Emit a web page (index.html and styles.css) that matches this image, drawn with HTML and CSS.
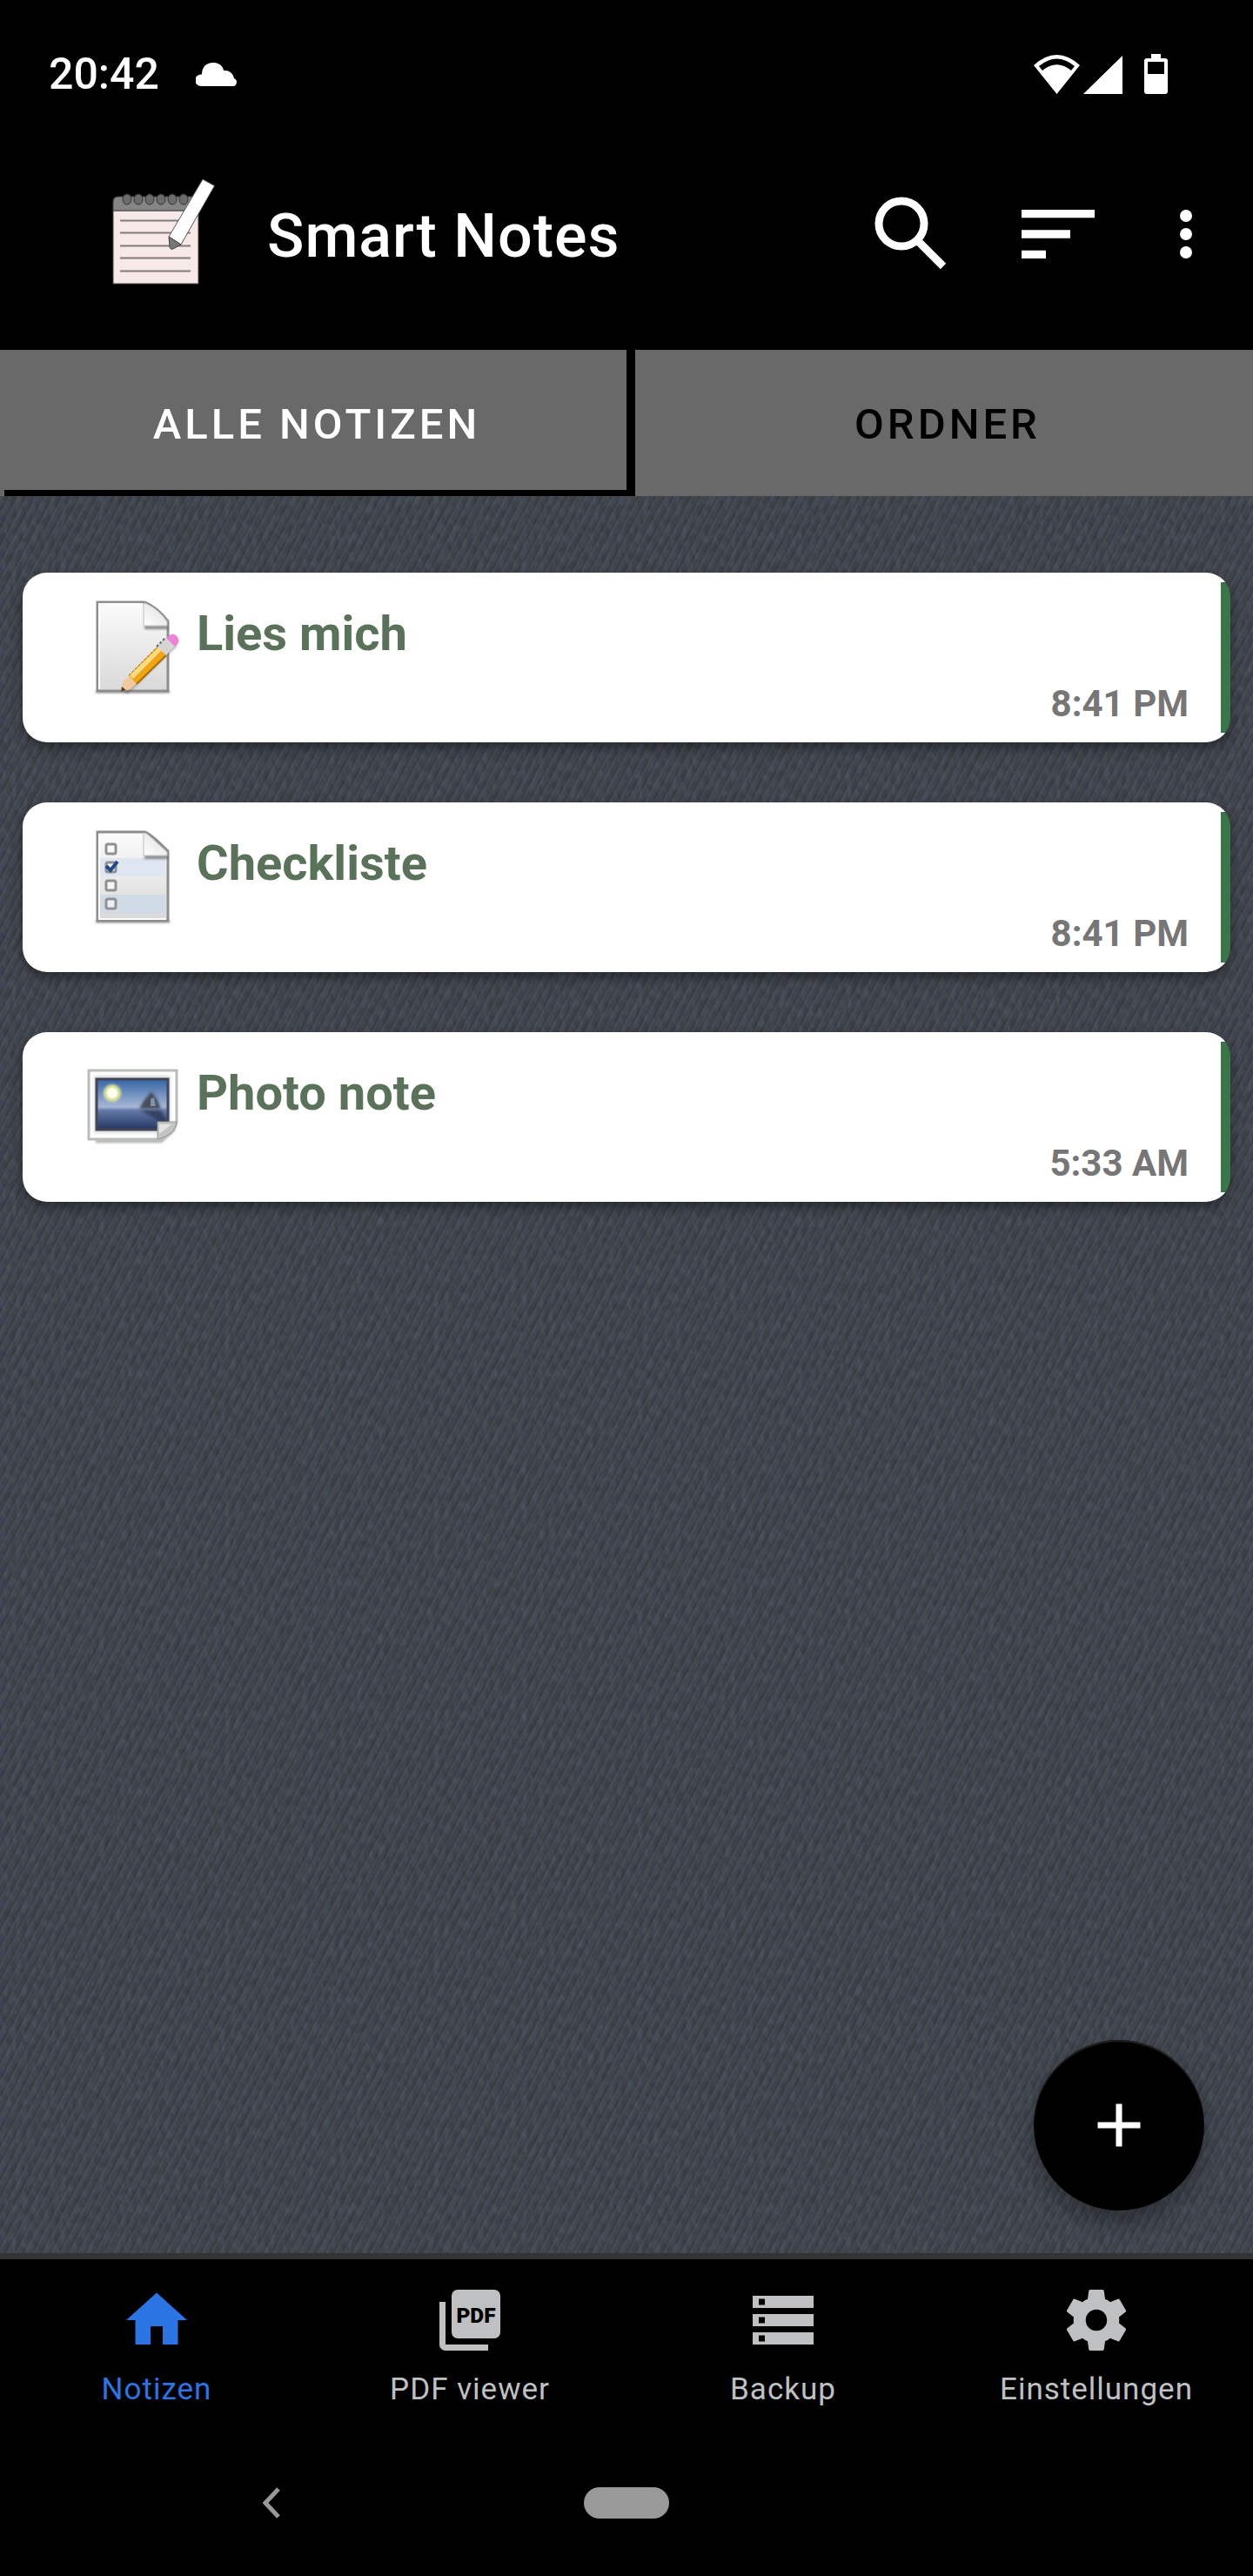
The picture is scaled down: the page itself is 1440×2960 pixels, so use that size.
FILE: index.html
```html
<!DOCTYPE html>
<html lang="de">
<head>
<meta charset="utf-8">
<meta name="viewport" content="width=device-width, initial-scale=1">
<title>Smart Notes</title>
<link rel="stylesheet" href="styles.css">
</head>
<body>
<header class="top">
  <div class="status">
    <span class="clock">20:42</span>
    <svg class="cloud" width="49" height="27" viewBox="0 0 49 27" aria-hidden="true"><path fill="#fff" d="M6 27a6.500 6.500 0 0 1 0-13.500h1C7 5 12 0 20 0c7 0 11 4 12 9 6-.5 11 3 12 9a4.700 4.700 0 0 1-1 9z"/></svg>
    <div class="signals">
      <svg width="53" height="45" viewBox="0 0 53 45" aria-hidden="true"><path fill="#fff" fill-rule="evenodd" d="M26.500 45 0 12Q26.500-12 53 12zM6 13l4 5Q26.500 4.500 43 18l4-5Q26.500-4 6 13z"/></svg>
      <svg width="45" height="45" viewBox="0 0 45 45" aria-hidden="true"><path fill="#fff" d="M0 45 45 1v44z"/></svg>
      <svg class="battery" width="27" height="46" viewBox="0 0 27 46" aria-hidden="true"><path fill="#fff" fill-rule="evenodd" d="M8 5V0h11v5h5a3 3 0 0 1 3 3v35a3 3 0 0 1-3 3H3a3 3 0 0 1-3-3V8a3 3 0 0 1 3-3zM4 9v14h19V9z"/></svg>
    </div>
  </div>
  <div class="toolbar">
    <svg width="118" height="128" viewBox="0 0 118 128" aria-hidden="true">
      <path d="M1 37h98v84H1z" fill="#f7e9e8" stroke="#4b4444"/>
      <path d="M1 37V27q0-6 6-6h86q6 0 6 6v10z" fill="#858585" stroke="#444"/>
      <g fill="#6b6b6b" stroke="#333"><ellipse cx="17" cy="24" rx="5" ry="6"/><ellipse cx="30" cy="24" rx="5" ry="6"/><ellipse cx="43" cy="24" rx="5" ry="6"/><ellipse cx="56" cy="24" rx="5" ry="6"/><ellipse cx="69" cy="24" rx="5" ry="6"/><ellipse cx="82" cy="24" rx="5" ry="6"/></g>
      <path d="M9 48.500h81M9 62.500h81M9 77.500h81M9 91.500h81M9 106.500h81" stroke="#827b7a" stroke-width="2"/>
      <path d="M104 1l13.500 7.500L79 76l-14-9z" fill="#fff" stroke="#555"/>
      <path d="M65 67l14 9-9 5q-4 1-4-3z" fill="#777" stroke="#444"/>
    </svg>
    <h1 class="title">Smart Notes</h1>
    <div class="actions">
      <button type="button" aria-label="Suchen"><svg width="112" height="112" viewBox="0 0 112 112"><circle cx="37" cy="44" r="26" fill="none" stroke="#fff" stroke-width="9"/><path d="M56 64l29 29" stroke="#fff" stroke-width="9"/></svg></button>
      <button type="button" aria-label="Sortieren"><svg width="112" height="112" viewBox="0 0 24 24"><path fill="#fff" d="M3 18h6v-2H3zM3 6v2h18V6zm0 7h12v-2H3z"/></svg></button>
      <button type="button" aria-label="Mehr"><svg width="84" height="84" viewBox="0 0 24 24"><g fill="#fff"><circle cx="12" cy="6" r="2"/><circle cx="12" cy="12" r="2"/><circle cx="12" cy="18" r="2"/></g></svg></button>
    </div>
  </div>
  <div class="tabs" role="tablist">
    <button type="button" class="tab active" role="tab" aria-selected="true">ALLE NOTIZEN</button>
    <button type="button" class="tab" role="tab" aria-selected="false">ORDNER</button>
  </div>
</header>

<main class="content">
  <ul class="notes">
    <li class="card">
      <svg class="note-icon" width="112" height="112" viewBox="0 0 112 112" aria-hidden="true">
        <defs>
          <linearGradient id="paper" x1="0" y1="0" x2="0" y2="1"><stop offset="0" stop-color="#fcfcfc"/><stop offset="1" stop-color="#d9d9d9"/></linearGradient>
          <linearGradient id="fold" x1="0" y1="1" x2="1" y2="0"><stop offset="0" stop-color="#fff"/><stop offset="1" stop-color="#ddd"/></linearGradient>
          <linearGradient id="sky" x1="0" y1="0" x2="0" y2="1"><stop offset="0" stop-color="#3465a4"/><stop offset=".55" stop-color="#a6b6d6"/><stop offset=".62" stop-color="#6379a8"/><stop offset="1" stop-color="#22365f"/></linearGradient>
          <filter id="soft" filterUnits="userSpaceOnUse" x="0" y="0" width="112" height="112"><feGaussianBlur stdDeviation="1.500"/></filter>
        </defs>
        <path d="M14 109h85" stroke="#999" stroke-width="3" filter="url(#soft)"/>
        <path d="M16 6h54q15 6 27 22v80H16z" fill="url(#paper)" stroke="#8d8d8d" stroke-width="3"/>
        <path d="M18 106V8h50" fill="none" stroke="#fff" stroke-width="2"/>
        <path d="M70 35h27" stroke="#666" stroke-width="3" filter="url(#soft)"/>
        <path d="M69 7q2 0 4 1 13 6 23 20v5H69z" fill="url(#fold)" stroke="#bbb"/>
        <path d="M48 110 106 54" stroke="#555" stroke-width="5" opacity=".5" filter="url(#soft)"/>
        <path d="M43 109l2-11 8-8 9 8-8 8z" fill="#f3c9a0"/><path d="M43 109l1-6 5 4z" fill="#53402f"/>
        <path d="M52 90 85 57l10 10-34 33z" fill="#f0a512"/><path d="M53 90 86 58l4 3-33 33z" fill="#ffdb85"/><path d="M52 90 85 57" stroke="#9c6a17" stroke-dasharray="3 2"/><path d="M61 100 95 67" stroke="#a86b0b" stroke-width="2"/>
        <path d="M85 57l10-10 10 9-10 11z" fill="#d5d5d5"/><path d="M84 57l10-10" stroke="#666" stroke-width="2" stroke-dasharray="3 2"/>
        <path d="M95 47q8-8 13-1 4 6-3 11z" fill="#ee82d8"/>
      </svg>
      <div class="note-body"><h2 class="note-title">Lies mich</h2><time class="note-time">8:41 PM</time></div>
    </li>
    <li class="card">
      <svg class="note-icon" width="112" height="112" viewBox="0 0 112 112" aria-hidden="true">
        <path d="M14 109h85" stroke="#999" stroke-width="3" filter="url(#soft)"/>
        <path d="M16 6h54q5 0 27 22v80H16z" fill="url(#paper)" stroke="#8d8d8d" stroke-width="3"/>
        <path d="M19 36h75v21H19z" fill="#dde6f1"/><path d="M19 78h75v21H19z" fill="#d1dbe6"/>
        <path d="M18 8v98h77" fill="none" stroke="#fff" stroke-width="2"/>
        <path d="M70 35h27" stroke="#666" stroke-width="3" filter="url(#soft)"/>
        <path d="M69 7q3 0 5 2l22 20v4H69z" fill="url(#fold)" stroke="#bbb"/>
        <g fill="#fff" fill-opacity=".6" stroke="#8f9194" stroke-width="3"><rect x="26" y="20" width="11" height="11" rx="2"/><rect x="26" y="41" width="11" height="11" rx="2"/><rect x="26" y="62" width="11" height="11" rx="2"/><rect x="26" y="83" width="11" height="11" rx="2"/></g>
        <path d="M26 45l5 5 8-10" fill="none" stroke="#204a87" stroke-width="4"/>
      </svg>
      <div class="note-body"><h2 class="note-title">Checkliste</h2><time class="note-time">8:41 PM</time></div>
    </li>
    <li class="card">
      <svg class="note-icon" width="112" height="112" viewBox="0 0 112 112" aria-hidden="true">
        <path d="M14 97h75l15-14" fill="none" stroke="#aaa" stroke-width="4" filter="url(#soft)"/>
        <path d="M6 16h101v60q-3 14-20 19H6z" fill="#fff" stroke="#b9bdb7" stroke-width="3"/>
        <path d="M12 22h88v66H12z" fill="#ddd" filter="url(#soft)"/>
        <path d="M15 26h82v58H15z" fill="url(#sky)" stroke="#424656" stroke-width="3"/>
        <circle cx="33" cy="42" r="10" fill="#dfe89a" filter="url(#soft)"/><circle cx="33" cy="42" r="6" fill="#fffff0"/>
        <path d="M64 60l5-9 9-11 7 10 4 10z" fill="#46505f" filter="url(#soft)"/><path d="M77 57v-8l4-2 2 10z" fill="#8391a8"/>
        <path d="M65 62h24l6 11v6L80 70z" fill="#26334f" opacity=".7" filter="url(#soft)"/>
        <path d="M85 95V75h22q-1 15-22 20z" fill="#c3c5c3" stroke="#979b97"/><path d="M87 89V78h14z" fill="#e4e4e4"/>
      </svg>
      <div class="note-body"><h2 class="note-title">Photo note</h2><time class="note-time">5:33 AM</time></div>
    </li>
  </ul>
  <button type="button" class="fab" aria-label="Neue Notiz"><svg width="84" height="84" viewBox="0 0 24 24"><path fill="#fff" d="M19 13h-6v6h-2v-6H5v-2h6V5h2v6h6z"/></svg></button>
</main>

<footer class="bottom">
  <nav class="nav">
    <a href="#notizen" class="nav-item current"><svg width="84" height="84" viewBox="0 0 24 24" aria-hidden="true"><path fill="currentColor" d="M10 20v-6h4v6h5v-8h3L12 3 2 12h3v8z"/></svg>Notizen</a>
    <a href="#pdf" class="nav-item"><svg width="84" height="84" viewBox="0 0 24 24" aria-hidden="true"><path fill="currentColor" d="M20 2H8a2 2 0 0 0-2 2v12a2 2 0 0 0 2 2h12a2 2 0 0 0 2-2V4a2 2 0 0 0-2-2zM4 6H2v14a2 2 0 0 0 2 2h14v-2H4z"/><text class="pdf-mark" x="14" y="12.800">PDF</text></svg>PDF viewer</a>
    <a href="#backup" class="nav-item"><svg width="84" height="84" viewBox="0 0 24 24" aria-hidden="true"><path fill="currentColor" fill-rule="evenodd" d="M2 20h20v-4H2zm2-3h2v2H4zM2 4v4h20V4zm4 3H4V5h2zm-4 7h20v-4H2zm2-3h2v2H4z"/></svg>Backup</a>
    <a href="#einstellungen" class="nav-item"><svg width="84" height="84" viewBox="0 0 24 24" aria-hidden="true"><path fill="currentColor" d="M12 15.500A3.500 3.500 0 0 1 8.500 12 3.500 3.500 0 0 1 12 8.500a3.500 3.500 0 0 1 3.500 3.500 3.500 3.500 0 0 1-3.500 3.500m7.430-2.530c.04-.32.07-.64.07-.97s-.03-.66-.07-1l2.110-1.630c.19-.15.24-.42.12-.64l-2-3.460c-.12-.22-.39-.31-.61-.22l-2.490 1c-.52-.39-1.060-.73-1.690-.98l-.37-2.650A.506.506 0 0 0 14 2h-4c-.25 0-.46.180-.5.420l-.37 2.650c-.63.250-1.170.590-1.690.980l-2.490-1c-.22-.09-.49 0-.61.220l-2 3.460c-.13.220-.07.490.12.640L4.570 11c-.04.340-.07.670-.07 1s.03.650.07.970l-2.110 1.660c-.19.150-.25.420-.12.640l2 3.460c.12.220.39.300.61.220l2.490-1.010c.52.400 1.060.740 1.690.990l.37 2.650c.04.240.25.420.5.420h4c.25 0 .46-.18.500-.42l.37-2.650c.63-.26 1.170-.59 1.690-.99l2.490 1.010c.22.080.49 0 .61-.22l2-3.460c.12-.22.07-.49-.12-.64z"/></svg>Einstellungen</a>
  </nav>
  <div class="system">
    <button type="button" class="back" aria-label="Zurück"><svg width="20" height="36" viewBox="0 0 20 36"><path d="M18 2 3 18l15 16" fill="none" stroke="#999" stroke-width="5"/></svg></button>
    <button type="button" class="home" aria-label="Startbildschirm"></button>
  </div>
</footer>
</body>
</html>
```
FILE: styles.css
```css
* { box-sizing: border-box; }

body {
  margin: 0;
  min-height: 100vh;
  display: flex;
  flex-direction: column;
  background: #000;
  color: #fff;
  font-family: Roboto, "Noto Sans", sans-serif;
}

svg { display: block; flex: none; }

button {
  padding: 0;
  border: 0;
  background: none;
  color: inherit;
  font: inherit;
}

/* Status bar */
.status {
  display: flex;
  align-items: center;
  padding: 55px 98px 21px 56px;
}
.clock {
  font-size: 50px;
  line-height: 60px;
  font-weight: 500;
}
.cloud { margin-left: 42px; }
.signals {
  display: flex;
  align-items: center;
  gap: 4px;
  margin-left: auto;
}
.battery { margin-left: 21px; }

/* Toolbar */
.toolbar {
  display: flex;
  align-items: center;
  min-height: 266px;
  padding: 0 35px 0 129px;
}
.title {
  margin: 0 0 0 60px;
  padding-top: 4px;
  font-size: 70px;
  line-height: 84px;
  font-weight: 500;
  letter-spacing: 1px;
}
.actions {
  display: flex;
  align-items: center;
  gap: 49px;
  margin-left: auto;
}

/* Tabs */
.tabs {
  display: flex;
}
.tab {
  flex: 1 0 8px;
  padding: 58px 0 54px 8px;
  background: #696969;
  color: #000;
  font-size: 49px;
  line-height: 56px;
  font-weight: 500;
  letter-spacing: 4px;
}
.tab.active {
  flex-basis: 28px;
  border-right: 10px solid #000;
  color: #fff;
  background: linear-gradient(#000, #000) 5px 100% / 100% 7px no-repeat #696969;
}

/* Note list on a woven cloth backdrop */
.content {
  position: relative;
  flex: 1;
  padding: 88px 26px 260px;
  background:
    repeating-linear-gradient(118deg, rgba(92, 88, 80, .26) 0 2px, rgba(0, 0, 0, 0) 4px 6px, rgba(20, 26, 34, .16) 8px 9px),
    repeating-linear-gradient(90deg, rgba(50, 68, 94, .26) 0 3px, rgba(0, 0, 0, 0) 5px 8px, rgba(50, 68, 94, .1) 10px 11px),
    url("data:image/svg+xml,%3Csvg xmlns='http://www.w3.org/2000/svg' width='240' height='240'%3E%3Cfilter id='n' x='0' y='0' width='100%25' height='100%25'%3E%3CfeTurbulence type='fractalNoise' baseFrequency='.16 .09' numOctaves='2' seed='4' stitchTiles='stitch'/%3E%3CfeColorMatrix values='0 0 0 0 .08 0 0 0 0 .09 0 0 0 0 .12 1.500 0 0 0 -.5'/%3E%3C/filter%3E%3Crect width='240' height='240' filter='url(%23n)'/%3E%3C/svg%3E"),
    #3c4046;
}
.notes {
  display: grid;
  gap: 69px;
  margin: 0;
  padding: 0;
  list-style: none;
}
.card {
  display: flex;
  align-items: flex-start;
  gap: 18px;
  padding: 28px 48px 14px 70px;
  border-radius: 28px;
  background: linear-gradient(#3a7449, #3a7449) 100% 50% / 11px calc(100% - 22px) no-repeat #fff;
  box-shadow: 0 6px 14px rgba(0, 0, 0, .4);
}
.note-body {
  display: flex;
  flex: 1;
  flex-direction: column;
  padding-top: 9px;
}
.note-title {
  margin: 0;
  color: #597259;
  font-size: 56px;
  line-height: 66px;
  font-weight: 700;
}
.note-time {
  align-self: flex-end;
  margin-top: 18px;
  color: #767676;
  font-size: 42px;
  line-height: 60px;
  font-weight: 700;
}
.fab {
  position: absolute;
  right: 56px;
  bottom: 49px;
  display: grid;
  place-items: center;
  width: 196px;
  height: 196px;
  border-radius: 50%;
  background: #000;
  box-shadow: inset 0 2px 1px #222, 0 14px 24px rgba(0, 0, 0, .3);
}

/* Bottom navigation */
.bottom { border-top: 7px solid #333; }
.nav {
  display: grid;
  grid-template-columns: repeat(4, 1fr);
}
.nav-item {
  display: flex;
  flex-direction: column;
  align-items: center;
  gap: 18px;
  padding: 28px 0 26px;
  color: #bfc0c2;
  font-size: 35px;
  line-height: 40px;
  letter-spacing: 1px;
  text-decoration: none;
}
.nav-item.current { color: #2b74e4; }
.pdf-mark {
  fill: #000;
  font-size: 7px;
  font-weight: 900;
  letter-spacing: 0;
  text-anchor: middle;
}

/* System navigation */
.system {
  display: grid;
  grid-template-columns: 1fr auto 1fr;
  align-items: center;
  padding: 66px 0;
}
.back {
  justify-self: start;
  margin-left: 45%;
}
.home {
  width: 98px;
  height: 36px;
  border-radius: 18px;
  background: #999;
}
```
